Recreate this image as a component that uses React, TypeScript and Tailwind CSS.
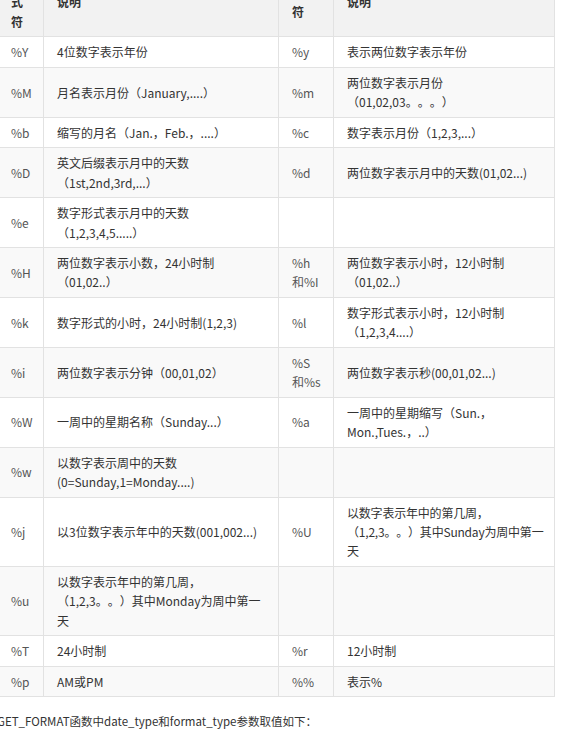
import React from "react";

type Row = [string, string, string, string];

// 格式符对照表（左右两组）
const rows: Row[] = [
  ["%Y", "4位数字表示年份", "%y", "表示两位数字表示年份"],
  ["%M", "月名表示月份（January,....）", "%m", "两位数字表示月份（01,02,03。。。）"],
  ["%b", "缩写的月名（Jan.，Feb.，....）", "%c", "数字表示月份（1,2,3,...）"],
  ["%D", "英文后缀表示月中的天数（1st,2nd,3rd,...）", "%d", "两位数字表示月中的天数(01,02...)"],
  ["%e", "数字形式表示月中的天数（1,2,3,4,5.....）", "", ""],
  ["%H", "两位数字表示小数，24小时制（01,02..）", "%h和%I", "两位数字表示小时，12小时制（01,02..）"],
  ["%k", "数字形式的小时，24小时制(1,2,3)", "%l", "数字形式表示小时，12小时制（1,2,3,4....）"],
  ["%i", "两位数字表示分钟（00,01,02）", "%S和%s", "两位数字表示秒(00,01,02...)"],
  ["%W", "一周中的星期名称（Sunday...）", "%a", "一周中的星期缩写（Sun.，Mon.,Tues.，..）"],
  ["%w", "以数字表示周中的天数(0=Sunday,1=Monday....)", "", ""],
  ["%j", "以3位数字表示年中的天数(001,002...)", "%U", "以数字表示年中的第几周，（1,2,3。。）其中Sunday为周中第一天"],
  ["%u", "以数字表示年中的第几周，（1,2,3。。）其中Monday为周中第一天", "", ""],
  ["%T", "24小时制", "%r", "12小时制"],
  ["%p", "AM或PM", "%%", "表示%"],
];

const cell = "border border-[#e2e2e2] pl-[13px] pr-[10px] py-[5px] align-middle";

export default function App() {
  return (
    <div
      className="min-h-[733px] w-[561px] overflow-hidden bg-white text-[12px] leading-[19.45px] text-[#333] [text-spacing-trim:space-all]"
      style={{ fontFamily: '"Noto Sans CJK SC", "Noto Sans", sans-serif' }}
    >
      <div className="-ml-[3px] -mt-[33px]">
        <table className="w-[557px] table-fixed border-collapse">
          <colgroup>
            <col className="w-[46px]" />
            <col className="w-[235px]" />
            <col className="w-[55px]" />
            <col className="w-[221px]" />
          </colgroup>
          <thead>
            <tr className="bg-[#f2f2f2] text-left font-bold">
              <th className={cell}>格式符</th>
              <th className={cell}>说明</th>
              <th className={cell}>格式符</th>
              <th className={cell}>说明</th>
            </tr>
          </thead>
          <tbody>
            {rows.map((r, i) => (
              <tr key={r[0]} className={i % 2 === 1 ? "bg-[#f9f9f9]" : "bg-white"}>
                <td className={`${cell} text-[#555]`}>{r[0]}</td>
                <td className={cell}>{r[1]}</td>
                <td className={`${cell} text-[#555]`}>{r[2]}</td>
                <td className={r[2] === "%U" ? `${cell} pr-[4px] tracking-[-0.2px]` : cell}>{r[3]}</td>
              </tr>
            ))}
          </tbody>
        </table>
        <p className="mt-[15px] text-[11.5px]">GET_FORMAT函数中date_type和format_type参数取值如下：</p>
      </div>
    </div>
  );
}
